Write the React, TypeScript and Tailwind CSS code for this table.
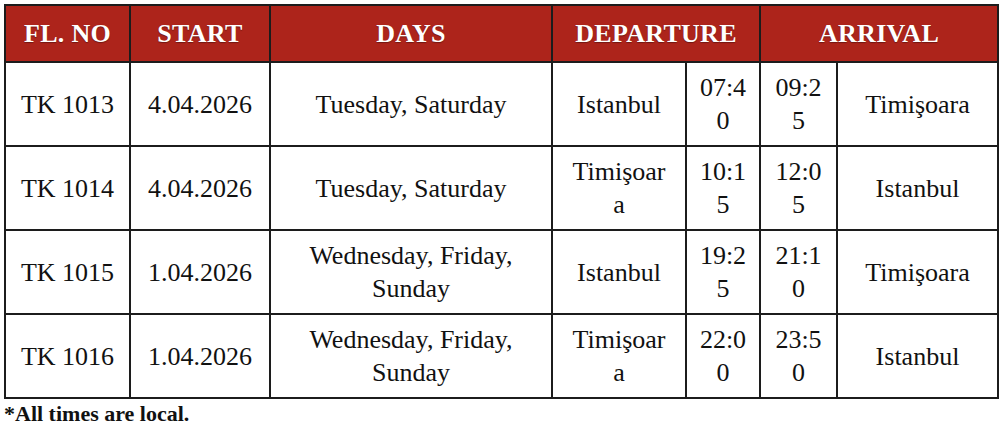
const rows = [
  { no: "TK 1013", start: "4.04.2026", days: ["Tuesday, Saturday"], dep: ["Istanbul"], dt: ["07:4", "0"], at: ["09:2", "5"], arr: "Timişoara" },
  { no: "TK 1014", start: "4.04.2026", days: ["Tuesday, Saturday"], dep: ["Timişoar", "a"], dt: ["10:1", "5"], at: ["12:0", "5"], arr: "Istanbul" },
  { no: "TK 1015", start: "1.04.2026", days: ["Wednesday, Friday,", "Sunday"], dep: ["Istanbul"], dt: ["19:2", "5"], at: ["21:1", "0"], arr: "Timişoara" },
  { no: "TK 1016", start: "1.04.2026", days: ["Wednesday, Friday,", "Sunday"], dep: ["Timişoar", "a"], dt: ["22:0", "0"], at: ["23:5", "0"], arr: "Istanbul" },
];

const Lines = ({ lines }: { lines: string[] }) => (
  <>
    {lines.map((l, i) => (
      <span key={i} className="block whitespace-nowrap">
        {l}
      </span>
    ))}
  </>
);

const td = "border-2 border-[#1c1c1c] text-center align-middle p-0";
const th = "border-2 border-[#1c1c1c] text-center align-middle font-bold text-white text-[26px] tracking-[0.3px] [text-shadow:0_1px_1px_rgba(0,0,0,0.35)]";

export default function App() {
  return (
    <div className="w-[1000px] h-[442px] bg-white pt-[4px] pl-[4px] font-['Liberation_Serif',serif] text-[#111]">
      <table className="table-fixed border-collapse w-[993px]">
        <colgroup>
          <col className="w-[125px]" />
          <col className="w-[140px]" />
          <col className="w-[282px]" />
          <col className="w-[134px]" />
          <col className="w-[74px]" />
          <col className="w-[77px]" />
          <col className="w-[161px]" />
        </colgroup>
        <thead>
          <tr className="h-[57px] bg-[#ad241b]">
            <th className={th}>FL. NO</th>
            <th className={th}>START</th>
            <th className={th}>DAYS</th>
            <th className={th} colSpan={2}>DEPARTURE</th>
            <th className={th} colSpan={2}>ARRIVAL</th>
          </tr>
        </thead>
        <tbody className="text-[26px] leading-[33px]">
          {rows.map((r) => (
            <tr key={r.no} className="h-[84px]">
              <td className={td}>{r.no}</td>
              <td className={td}>{r.start}</td>
              <td className={td}>
                <Lines lines={r.days} />
              </td>
              <td className={td}>
                <Lines lines={r.dep} />
              </td>
              <td className={td}>
                <Lines lines={r.dt} />
              </td>
              <td className={td}>
                <Lines lines={r.at} />
              </td>
              <td className={td}>{r.arr}</td>
            </tr>
          ))}
        </tbody>
      </table>
      <p className="mt-[2px] font-bold text-[22px] leading-[26px]">*All times are local.</p>
    </div>
  );
}
